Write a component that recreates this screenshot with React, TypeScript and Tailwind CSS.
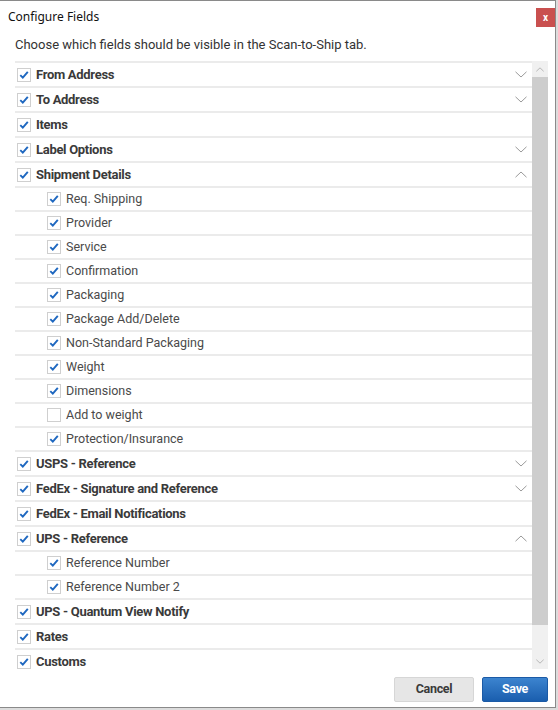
import type { ReactNode } from 'react'

type Row = {
  label: string
  level: 0 | 1
  checked: boolean
  chevron?: 'down' | 'up'
}

const ROWS: Row[] = [
  { label: 'From Address', level: 0, checked: true, chevron: 'down' },
  { label: 'To Address', level: 0, checked: true, chevron: 'down' },
  { label: 'Items', level: 0, checked: true },
  { label: 'Label Options', level: 0, checked: true, chevron: 'down' },
  { label: 'Shipment Details', level: 0, checked: true, chevron: 'up' },
  { label: 'Req. Shipping', level: 1, checked: true },
  { label: 'Provider', level: 1, checked: true },
  { label: 'Service', level: 1, checked: true },
  { label: 'Confirmation', level: 1, checked: true },
  { label: 'Packaging', level: 1, checked: true },
  { label: 'Package Add/Delete', level: 1, checked: true },
  { label: 'Non-Standard Packaging', level: 1, checked: true },
  { label: 'Weight', level: 1, checked: true },
  { label: 'Dimensions', level: 1, checked: true },
  { label: 'Add to weight', level: 1, checked: false },
  { label: 'Protection/Insurance', level: 1, checked: true },
  { label: 'USPS - Reference', level: 0, checked: true, chevron: 'down' },
  { label: 'FedEx - Signature and Reference', level: 0, checked: true, chevron: 'down' },
  { label: 'FedEx - Email Notifications', level: 0, checked: true },
  { label: 'UPS - Reference', level: 0, checked: true, chevron: 'up' },
  { label: 'Reference Number', level: 1, checked: true },
  { label: 'Reference Number 2', level: 1, checked: true },
  { label: 'UPS - Quantum View Notify', level: 0, checked: true },
  { label: 'Rates', level: 0, checked: true },
  { label: 'Customs', level: 0, checked: true },
]

function Checkbox({ checked }: { checked: boolean }) {
  return (
    <span className="flex size-[14px] shrink-0 items-center justify-center border border-[#cfcfcf] bg-white">
      {checked && (
        <svg viewBox="0 0 12 12" className="size-[12px]" aria-hidden>
          <path
            d="M2.3 6.2 L4.8 8.7 L9.8 2.8"
            fill="none"
            stroke="#1f68c0"
            strokeWidth="1.9"
          />
        </svg>
      )}
    </span>
  )
}

function Chevron({ dir, className = '' }: { dir: 'down' | 'up'; className?: string }) {
  return (
    <svg viewBox="0 0 12 7" className={`h-[7px] w-[12px] ${className}`} aria-hidden>
      <path
        d={dir === 'down' ? 'M0.5 0.8 L6 6 L11.5 0.8' : 'M0.5 6.2 L6 1 L11.5 6.2'}
        fill="none"
        stroke="#9a9a9a"
        strokeWidth="1"
      />
    </svg>
  )
}

function FieldRow({ row }: { row: Row }) {
  const top = row.level === 0
  return (
    <div
      className={`flex items-center border-b-2 border-[#ebebeb] pr-[5px] ${
        top ? 'h-[25px] pl-[2px]' : 'h-[24px] pl-[32px]'
      }`}
    >
      <Checkbox checked={row.checked} />
      <span
        className={`ml-[5px] flex-1 ${
          top
            ? 'text-[13px] font-bold tracking-[-0.3px] text-[#3a3a3a]'
            : 'text-[12.5px] text-[#4a4a4a]'
        }`}
      >
        {row.label}
      </span>
      {row.chevron && <Chevron dir={row.chevron} />}
    </div>
  )
}

function Button({ children, primary }: { children: ReactNode; primary?: boolean }) {
  return (
    <button
      type="button"
      className={`h-[25px] rounded-[2px] text-[12.5px] font-bold tracking-[-0.3px] ${
        primary
          ? 'w-[66px] border border-[#1b5aa6] bg-gradient-to-b from-[#3c84cf] to-[#1a5eae] text-white'
          : 'w-[80px] border border-[#d6d6d6] bg-[#e6e6e6] text-[#3a3a3a]'
      }`}
    >
      {children}
    </button>
  )
}

export default function App() {
  return (
    <div className="h-[710px] w-[558px] overflow-hidden bg-[#dcdcdc] font-['Roboto',sans-serif]">
      <div className="flex h-[708px] w-[556px] flex-col border border-l-0 border-[#8a8a8a] bg-white">
        <div className="flex h-[31px] items-center justify-between pl-[8px]">
          <span className="font-['Noto_Sans',sans-serif] text-[12px] text-[#111]">
            Configure Fields
          </span>
          <span className="mt-[2px] flex h-[19px] w-[19px] items-center justify-center bg-[#c9504f] text-[10px] font-bold leading-none text-white">
            x
          </span>
        </div>
        <p className="pl-[15px] text-[13px] leading-[26px] text-[#333]">
          Choose which fields should be visible in the Scan-to-Ship tab.
        </p>
        <div className="ml-[15px] mt-[3px] flex h-[608px] w-[533px]">
          <div className="h-full flex-1 overflow-hidden border-t-2 border-[#ebebeb]">
            {ROWS.map((row) => (
              <FieldRow key={row.label} row={row} />
            ))}
          </div>
          <div className="flex h-full w-[16px] flex-col bg-[#f0f0f0]">
            <div className="flex h-[16px] items-center justify-center">
              <Chevron dir="up" className="!h-[5px] !w-[8px]" />
            </div>
            <div className="mx-0 h-[548px] bg-[#cdcdcd]" />
            <div className="flex-1" />
            <div className="flex h-[16px] items-center justify-center">
              <Chevron dir="down" className="!h-[5px] !w-[8px]" />
            </div>
          </div>
        </div>
        <div className="mt-[8px] flex justify-end gap-[8px] pr-[7px]">
          <Button>Cancel</Button>
          <Button primary>Save</Button>
        </div>
      </div>
    </div>
  )
}
